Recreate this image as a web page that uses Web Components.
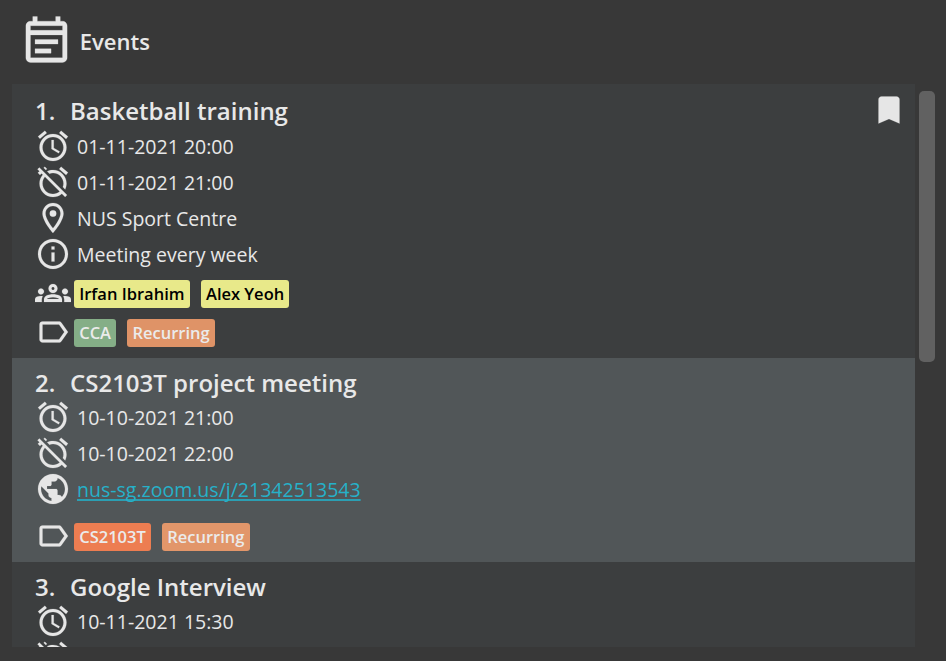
<!DOCTYPE html>
<html lang="en">
<head>
<meta charset="utf-8">
<title>Events</title>
<style>
  html, body { margin: 0; height: 100%; background: #383838; overflow: hidden; }
  body { font-family: "Open Sans", "Noto Sans", sans-serif; color: #e8e8e8; }
</style>
</head>
<body>
<event-panel heading="Events">
  <event-card number="1." name="Basketball training" marked>
    <event-line icon="alarm">01-11-2021 20:00</event-line>
    <event-line icon="alarmOff">01-11-2021 21:00</event-line>
    <event-line icon="place">NUS Sport Centre</event-line>
    <event-line icon="info">Meeting every week</event-line>
    <tag-row icon="groups" style="--top:8px">
      <tag-chip style="--fill:#e8e98a;--ink:#000">Irfan Ibrahim</tag-chip>
      <tag-chip style="--fill:#e8e98a;--ink:#000">Alex Yeoh</tag-chip>
    </tag-row>
    <tag-row icon="label" style="--top:11px">
      <tag-chip style="--fill:#85ae87">CCA</tag-chip>
      <tag-chip style="--fill:#df9367">Recurring</tag-chip>
    </tag-row>
  </event-card>
  <event-card number="2." name="CS2103T project meeting" selected>
    <event-line icon="alarm">10-10-2021 21:00</event-line>
    <event-line icon="alarmOff">10-10-2021 22:00</event-line>
    <event-line icon="globe" link>nus-sg.zoom.us/j/21342513543</event-line>
    <tag-row icon="label" style="--top:16px">
      <tag-chip style="--fill:#ed7d51">CS2103T</tag-chip>
      <tag-chip style="--fill:#e2966a">Recurring</tag-chip>
    </tag-row>
  </event-card>
  <event-card number="3." name="Google Interview">
    <event-line icon="alarm">10-11-2021 15:30</event-line>
    <event-line icon="alarmOff"></event-line>
  </event-card>
</event-panel>
<script>
const PATHS = {
  note: 'M19 4h-1V2h-2v2H8V2H6v2H5c-1.11 0-1.99.9-1.99 2L3 20c0 1.1.89 2 2 2h14c1.1 0 2-.9 2-2V6c0-1.1-.9-2-2-2zm0 16H5V10h14v10zm0-12H5V6h14v2zM7 12h10v2H7zm0 4h7v2H7z',
  alarm: 'M22 5.72l-4.6-3.86-1.29 1.53 4.6 3.86L22 5.72zM7.88 3.39L6.6 1.86 2 5.71l1.29 1.53 4.59-3.85zM12.5 8H11v6l4.75 2.85.75-1.23-4-2.37V8zM12 4c-4.97 0-9 4.03-9 9s4.02 9 9 9c4.97 0 9-4.03 9-9s-4.03-9-9-9zm0 16c-3.87 0-7-3.13-7-7s3.13-7 7-7 7 3.13 7 7-3.13 7-7 7z',
  alarmOff: 'M12 6c3.87 0 7 3.13 7 7 0 .84-.16 1.65-.43 2.4l1.52 1.52c.58-1.19.91-2.51.91-3.92 0-4.97-4.03-9-9-9-1.41 0-2.73.33-3.92.91L9.6 6.43C10.35 6.16 11.16 6 12 6zm10-.28l-4.6-3.86-1.29 1.53 4.6 3.86L22 5.72zM2.92 2.29L1.65 3.57 2.98 4.9l-1.11.93 1.42 1.42 1.11-.94.8.8C3.83 8.69 3 10.75 3 13c0 4.97 4.02 9 9 9 2.25 0 4.31-.83 5.89-2.2l2.2 2.2 1.27-1.27L3.89 3.27l-.97-.98zm13.55 16.1C15.26 19.39 13.7 20 12 20c-3.87 0-7-3.13-7-7 0-1.7.61-3.26 1.61-4.47l9.86 9.86zM8.02 3.28L6.6 1.86l-.86.71 1.42 1.42.86-.71z',
  place: 'M12 2C8.13 2 5 5.13 5 9c0 5.25 7 13 7 13s7-7.75 7-13c0-3.87-3.13-7-7-7zM7 9c0-2.76 2.24-5 5-5s5 2.24 5 5c0 2.88-2.88 7.19-5 9.88C9.92 16.21 7 11.85 7 9zm5-2.2a2.2 2.2 0 1 0 0 4.4 2.2 2.2 0 0 0 0-4.4z',
  info: 'M11 7h2v2h-2zm0 4h2v6h-2zm1-9C6.48 2 2 6.48 2 12s4.48 10 10 10 10-4.48 10-10S17.52 2 12 2zm0 18c-4.41 0-8-3.59-8-8s3.59-8 8-8 8 3.59 8 8-3.59 8-8 8z',
  groups: 'M4 13c1.1 0 2-.9 2-2s-.9-2-2-2-2 .9-2 2 .9 2 2 2zm1.13 1.1c-.37-.06-.74-.1-1.13-.1-.99 0-1.93.21-2.78.58C.48 14.9 0 15.62 0 16.43V18h4.5v-1.61c0-.83.23-1.61.63-2.29zM20 13c1.1 0 2-.9 2-2s-.9-2-2-2-2 .9-2 2 .9 2 2 2zm4 3.43c0-.81-.48-1.53-1.22-1.85-.85-.37-1.79-.58-2.78-.58-.39 0-.76.04-1.13.1.4.68.63 1.46.63 2.29V18H24v-1.57zm-7.76-2.78c-1.17-.52-2.61-.9-4.24-.9-1.63 0-3.07.39-4.24.9C6.68 14.13 6 15.21 6 16.39V18h12v-1.61c0-1.18-.68-2.26-1.76-2.74zM8.07 16c.09-.23.13-.39.91-.69.97-.38 1.99-.56 3.02-.56s2.05.18 3.02.56c.77.3.81.46.91.69H8.07zM12 8c.55 0 1 .45 1 1s-.45 1-1 1-1-.45-1-1 .45-1 1-1m0-2c-1.66 0-3 1.34-3 3s1.34 3 3 3 3-1.34 3-3-1.34-3-3-3z',
  label: 'M17.63 5.84C17.27 5.33 16.67 5 16 5L5 5.01C3.9 5.01 3 5.9 3 7v10c0 1.1.9 1.99 2 1.99L16 19c.67 0 1.27-.33 1.63-.84L22 12l-4.37-6.16zM16 17H5V7h11l3.55 5L16 17z',
  globe: 'M12 2C6.48 2 2 6.48 2 12s4.48 10 10 10 10-4.48 10-10S17.52 2 12 2zm-1 17.93c-3.95-.49-7-3.85-7-7.93 0-.62.08-1.21.21-1.79L9 15v1c0 1.1.9 2 2 2v1.93zm6.9-2.54c-.26-.81-1-1.39-1.9-1.39h-1v-3c0-.55-.45-1-1-1H8v-2h2c.55 0 1-.45 1-1V7h2c1.1 0 2-.9 2-2v-.41c2.93 1.19 5 4.06 5 7.41 0 2.08-.8 3.97-2.1 5.39z',
  bookmark: 'M17 3H7c-1.1 0-1.99.9-1.99 2L5 21l7-3 7 3V5c0-1.1-.9-2-2-2z'
};
class UiIcon extends HTMLElement {
  connectedCallback() {
    this.attachShadow({ mode: 'open' }).innerHTML = `
      <style>:host{display:block;flex:none;width:var(--size,36px);height:var(--size,36px)}svg{display:block;width:100%;height:100%}</style>
      <svg viewBox="0 0 24 24" fill="#e6e6e6" stroke="#e6e6e6" stroke-opacity=".35" stroke-width=".3"><path d="${PATHS[this.getAttribute('name')]}"/></svg>`;
  }
}
class EventLine extends HTMLElement {
  connectedCallback() {
    this.attachShadow({ mode: 'open' }).innerHTML = `
      <style>
        :host{display:flex;align-items:center;gap:6px;height:36px;font-size:19.53px;line-height:36px;white-space:nowrap}
        span{padding-top:2px}
        :host([link]) span{color:#26b1c9;text-decoration:underline;text-decoration-thickness:2px;text-underline-offset:2px;text-decoration-skip-ink:none;text-decoration-color:#2b9fb3}
      </style>
      <ui-icon name="${this.getAttribute('icon')}"></ui-icon><span><slot></slot></span>`;
  }
}
class TagChip extends HTMLElement {
  connectedCallback() {
    this.attachShadow({ mode: 'open' }).innerHTML = `
      <style>:host{display:block;box-sizing:border-box;height:28px;padding:0 5.3px 0 5.2px;border-radius:3px;background:var(--fill);color:var(--ink,#ebebeb);font-size:16.5px;font-weight:600;line-height:28px;white-space:nowrap}</style>
      <slot></slot>`;
  }
}
class TagRow extends HTMLElement {
  connectedCallback() {
    this.attachShadow({ mode: 'open' }).innerHTML = `
      <style>
        :host{display:flex;gap:3px;height:28px;margin-top:var(--top)}
        ui-icon{margin-top:-5px}
        div{display:flex;gap:11px}
      </style>
      <ui-icon name="${this.getAttribute('icon')}"></ui-icon><div><slot></slot></div>`;
  }
}
class EventCard extends HTMLElement {
  connectedCallback() {
    const marked = this.hasAttribute('marked');
    this.attachShadow({ mode: 'open' }).innerHTML = `
      <style>
        :host{display:block;padding:0 8px 11px 23px;background:#3c3e3f}
        :host([selected]){background:#515658}
        header{display:flex;height:41px;font-size:24px;font-weight:600;line-height:50px;white-space:nowrap}
        :host([marked]) header{height:44px;line-height:54px}
        .number{width:35px}
        .name{flex:1}
        ui-icon{margin-top:8px}
      </style>
      <header><span class="number">${this.getAttribute('number')}</span><span class="name">${this.getAttribute('name')}</span>${marked ? '<ui-icon name="bookmark"></ui-icon>' : ''}</header>
      <slot></slot>`;
  }
}
class ScrollThumb extends HTMLElement {
  connectedCallback() {
    this.attachShadow({ mode: 'open' }).innerHTML = `
      <style>:host{display:block;width:15.5px;height:271px;margin:6.5px 0 0 4.3px;border-radius:5px;background:#616161}</style>`;
  }
}
class EventPanel extends HTMLElement {
  connectedCallback() {
    this.attachShadow({ mode: 'open' }).innerHTML = `
      <style>
        :host{display:block;width:946px;height:661px;background:#383838}
        .head{display:flex;height:84px;box-sizing:border-box;padding:12px 0 0 19.3px;font-size:22px;font-weight:600;line-height:59px}
        .head ui-icon{--size:55px;margin-right:5.5px}
        .body{display:flex;padding-left:12px}
        .list{width:903px;height:563px;overflow:hidden}
      </style>
      <div class="head"><ui-icon name="note"></ui-icon><span>${this.getAttribute('heading')}</span></div>
      <div class="body"><div class="list"><slot></slot></div><scroll-thumb></scroll-thumb></div>`;
  }
}
customElements.define('ui-icon', UiIcon);
customElements.define('event-line', EventLine);
customElements.define('tag-chip', TagChip);
customElements.define('tag-row', TagRow);
customElements.define('event-card', EventCard);
customElements.define('scroll-thumb', ScrollThumb);
customElements.define('event-panel', EventPanel);
</script>
</body>
</html>
